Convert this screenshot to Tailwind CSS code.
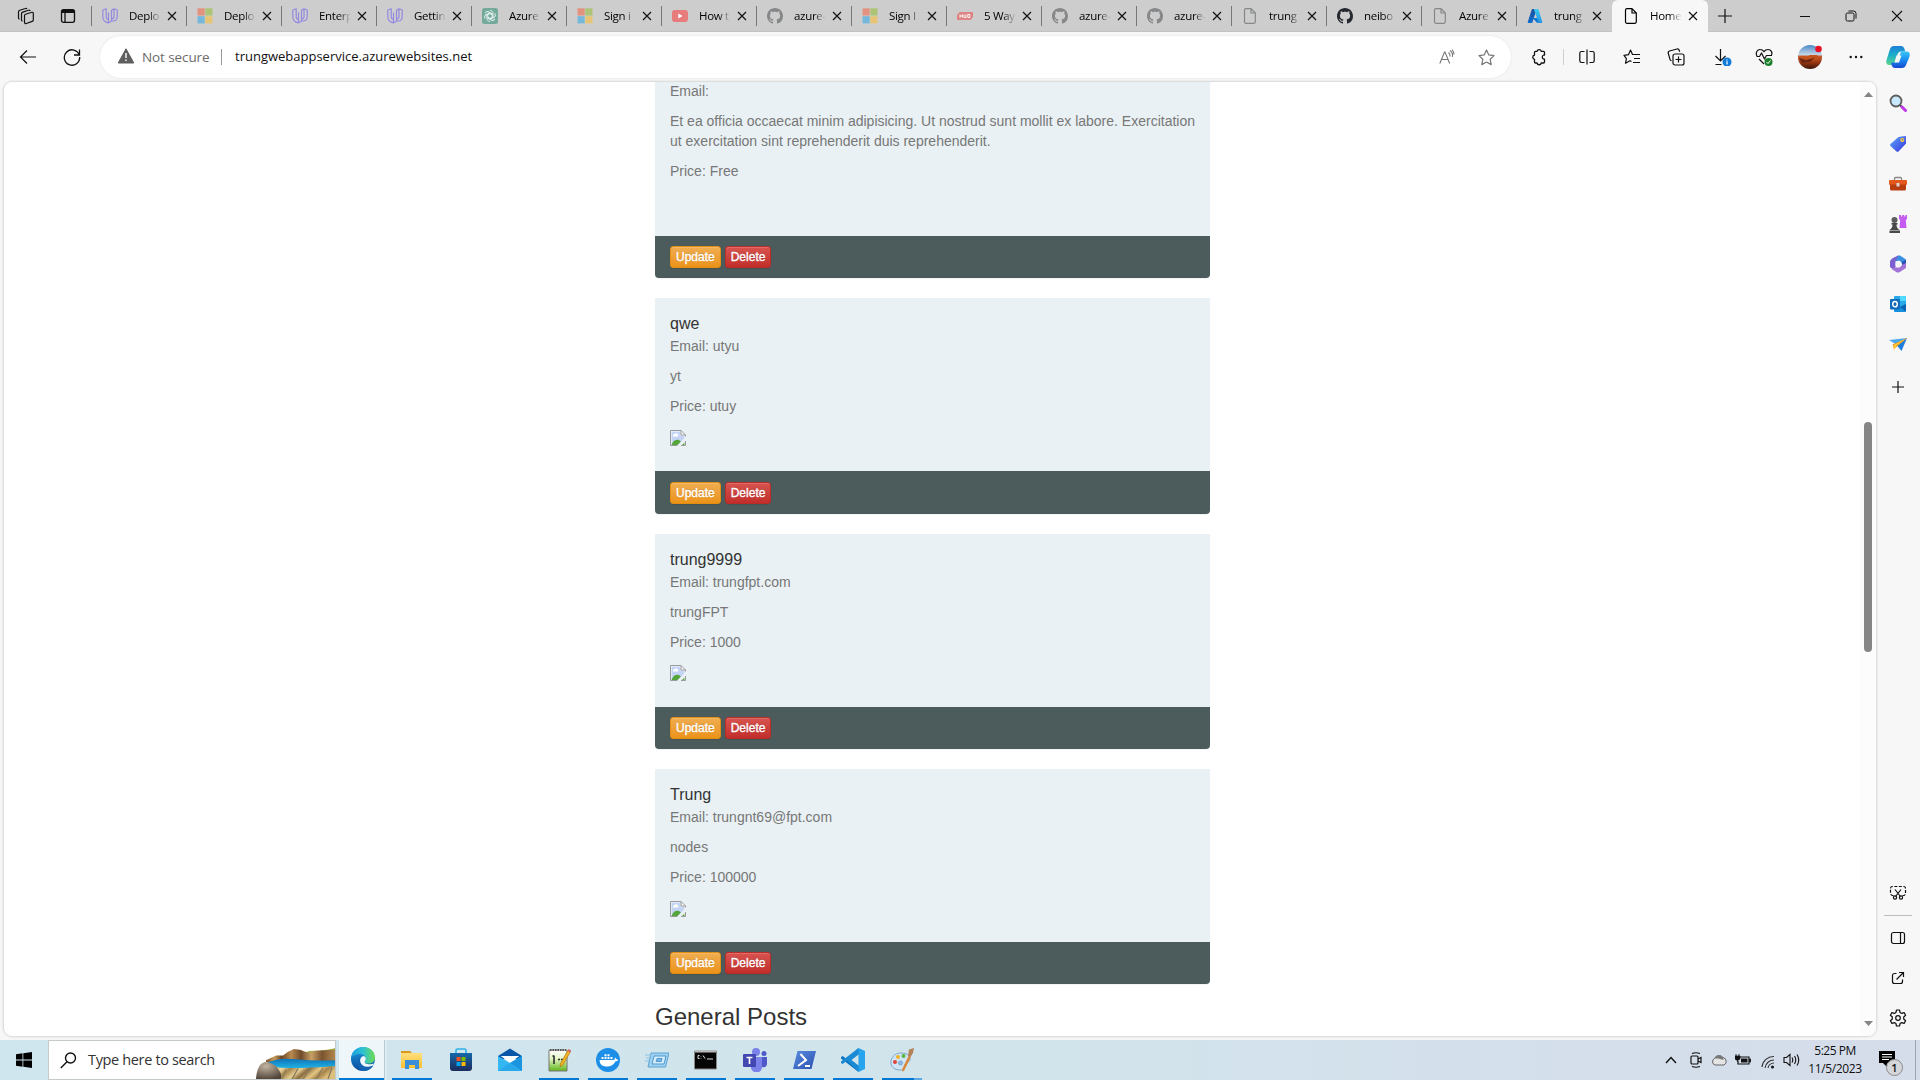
<!DOCTYPE html>
<html lang="en">
<head>
<meta charset="utf-8">
<title>Home</title>
<script src="https://cdn.jsdelivr.net/npm/@tailwindcss/browser@4"></script>
</head>
<body class="w-[1920px] h-[1080px] overflow-hidden bg-[#f7f7f7] font-['Open_Sans','Noto_Sans',sans-serif] text-black flex flex-col">

<svg class="absolute w-0 h-0" aria-hidden="true">
  <defs>
    <linearGradient id="gAz" x1="0" y1="0" x2="0" y2="1"><stop offset="0" stop-color="#1b4f9c"/><stop offset="1" stop-color="#0f6fd0"/></linearGradient>
    <linearGradient id="gAz2" x1="0" y1="0" x2="0" y2="1"><stop offset="0" stop-color="#3ccbf4"/><stop offset="1" stop-color="#2892df"/></linearGradient>
    <linearGradient id="gTag" x1="0" y1="0" x2="1" y2="1"><stop offset="0" stop-color="#5ba7f7"/><stop offset="1" stop-color="#3a36e0"/></linearGradient>
    <linearGradient id="gCopA" x1="0" y1="0" x2="0" y2="1"><stop offset="0" stop-color="#1a7fd8"/><stop offset=".5" stop-color="#1fb0c8"/><stop offset="1" stop-color="#5fd68a"/></linearGradient>
    <linearGradient id="gCopB" x1="0" y1="0" x2="0" y2="1"><stop offset="0" stop-color="#3cc4f7"/><stop offset=".5" stop-color="#1a8cf0"/><stop offset="1" stop-color="#1748d0"/></linearGradient>
    <linearGradient id="gSky" x1="0" y1="0" x2="0" y2="1"><stop offset="0" stop-color="#4a87c8"/><stop offset=".4" stop-color="#c3d5e6"/><stop offset=".48" stop-color="#c8562a"/><stop offset=".7" stop-color="#a03a14"/><stop offset="1" stop-color="#3b1409"/></linearGradient>
    <linearGradient id="gEdge" x1="0" y1="0" x2="1" y2="0"><stop offset="0" stop-color="#1b9de2"/><stop offset=".5" stop-color="#2cc3d3"/><stop offset="1" stop-color="#6fdc4e"/></linearGradient>
    <linearGradient id="gEdge2" x1="0" y1="0" x2="0" y2="1"><stop offset="0" stop-color="#1b9de2"/><stop offset="1" stop-color="#0c4a9a"/></linearGradient>
    <linearGradient id="gFold" x1="0" y1="0" x2="0" y2="1"><stop offset="0" stop-color="#ffdf7e"/><stop offset="1" stop-color="#fbc02f"/></linearGradient>
    <linearGradient id="gStore" x1="0" y1="0" x2="0" y2="1"><stop offset="0" stop-color="#1468a8"/><stop offset="1" stop-color="#1c2c5c"/></linearGradient>
    <linearGradient id="gPs" x1="0" y1="0" x2="1" y2="1"><stop offset="0" stop-color="#5a8be0"/><stop offset="1" stop-color="#2a52b0"/></linearGradient>
    <linearGradient id="gNpp" x1="0" y1="0" x2="0" y2="1"><stop offset="0" stop-color="#fff"/><stop offset=".4" stop-color="#e6f6c8"/><stop offset="1" stop-color="#5fb51a"/></linearGradient>
    <linearGradient id="gWater" x1="0" y1="0" x2="0" y2="1"><stop offset="0" stop-color="#0d74b8"/><stop offset="1" stop-color="#23b6e6"/></linearGradient>
    <linearGradient id="gRock" x1="0" y1="0" x2="1" y2="0"><stop offset="0" stop-color="#7a5330"/><stop offset=".12" stop-color="#c49a5c"/><stop offset=".22" stop-color="#6b4526"/><stop offset=".36" stop-color="#b88a4e"/><stop offset=".5" stop-color="#6f4a2a"/><stop offset=".65" stop-color="#c9a066"/><stop offset=".8" stop-color="#7a5330"/><stop offset="1" stop-color="#b48c50"/></linearGradient>
    <linearGradient id="gSand" x1="0" y1="0" x2="1" y2=".25"><stop offset="0" stop-color="#c7a560"/><stop offset=".2" stop-color="#edd79c"/><stop offset=".32" stop-color="#a5824a"/><stop offset=".48" stop-color="#e8cf92"/><stop offset=".6" stop-color="#8a6c40"/><stop offset=".75" stop-color="#e3c682"/><stop offset=".87" stop-color="#a5824a"/><stop offset="1" stop-color="#dcbf7c"/></linearGradient>
    <radialGradient id="gBoul" cx=".4" cy=".25" r=".8"><stop offset="0" stop-color="#c3b4a0"/><stop offset="1" stop-color="#4f4438"/></radialGradient>

    <symbol id="x" viewBox="0 0 16 16"><path d="M4 4l8 8M12 4l-8 8" stroke="#111" stroke-width="1.2" fill="none"/></symbol>
    <symbol id="udacity" viewBox="0 0 16 16"><path d="M.8 2 4.200.8v7.700c0 1.800.8 2.800 2.300 2.800M.8 2v6.500c0 3.300 2 5.800 5.700 6.300V4.500M6.500 14.800c1.800-.3 3-1.500 3.500-3M9.500 11.800V2.200l2.500-1.400 3.200 1.200v6.500c0 2.800-1.700 4.500-4.200 4.500-.8 0-1.500-.2-2-.7M12 .8v8c0 1.200-.8 2-2.500 2.200" stroke="#938ae0" stroke-width="1.200" fill="none" stroke-linejoin="round"/></symbol>
    <symbol id="ms" viewBox="0 0 16 16"><path fill="#e39280" d="M.5.300h7.200v7.200H.5z"/><path fill="#adc476" d="M8.300.3h7.200v7.200H8.300z"/><path fill="#75b8db" d="M.5 8.200h7.200v7.200H.5z"/><path fill="#e7c574" d="M8.300 8.200h7.200v7.200H8.300z"/></symbol>
    <symbol id="gpt" viewBox="0 0 16 16"><rect width="16" height="16" rx="2.500" fill="#74aa9c"/><g fill="none" stroke="#e9f3f0" stroke-width=".9"><path d="M8 2.500c2 0 3 1.300 3 2.800v3.500L8 10.500"/><path d="M8 2.500c2 0 3 1.300 3 2.800v3.500L8 10.500" transform="rotate(60 8 8)"/><path d="M8 2.500c2 0 3 1.300 3 2.800v3.500L8 10.500" transform="rotate(120 8 8)"/><path d="M8 2.500c2 0 3 1.300 3 2.800v3.500L8 10.500" transform="rotate(180 8 8)"/><path d="M8 2.500c2 0 3 1.300 3 2.800v3.500L8 10.500" transform="rotate(240 8 8)"/><path d="M8 2.500c2 0 3 1.300 3 2.800v3.500L8 10.500" transform="rotate(300 8 8)"/></g></symbol>
    <symbol id="yt" viewBox="0 0 16 16"><rect y="2" width="16" height="12" rx="3" fill="#e77c7c"/><path d="M6.300 5.500 10.500 8l-4.200 2.500z" fill="#fff"/></symbol>
    <symbol id="gh" viewBox="0 0 16 16"><path fill="currentColor" d="M8 0C3.580 0 0 3.580 0 8c0 3.540 2.290 6.530 5.470 7.590.4.070.55-.17.55-.38 0-.19-.01-.82-.01-1.490-2.010.37-2.530-.49-2.690-.94-.09-.23-.48-.94-.82-1.130-.28-.15-.68-.52-.01-.53.63-.01 1.080.58 1.230.82.72 1.210 1.870.87 2.330.66.070-.52.28-.87.51-1.070-1.780-.2-3.640-.89-3.640-3.950 0-.87.31-1.590.82-2.150-.08-.2-.36-1.020.08-2.120 0 0 .67-.21 2.200.82.640-.18 1.320-.27 2-.27s1.360.09 2 .27c1.530-1.040 2.200-.82 2.200-.82.44 1.100.16 1.920.08 2.120.51.56.82 1.270.82 2.150 0 3.070-1.870 3.750-3.650 3.950.29.25.54.73.54 1.480 0 1.070-.01 1.930-.01 2.200 0 .21.15.46.55.38A8.010 8.010 0 0 0 16 8c0-4.420-3.580-8-8-8z"/></symbol>
    <symbol id="page" viewBox="0 0 16 16"><path d="M4 .7h5l4.300 4.300v8.800a1.500 1.500 0 0 1-1.500 1.500H4a1.500 1.500 0 0 1-1.500-1.500V2.200A1.500 1.500 0 0 1 4 .7zM9 .7V5h4.300" fill="none" stroke="currentColor" stroke-width="1.200" stroke-linejoin="round"/></symbol>
    <symbol id="hud" viewBox="0 0 16 16"><path d="M2.500 4H16v5l-2.500 3H0V7z" fill="#dd8583"/><path d="M3 6.500v3M5.500 6.500v3M3 8h2.500M7 6.500v3h2v-3M10.800 6.500v3h2v-3z" stroke="#fff" stroke-width=".9" fill="none"/></symbol>
    <symbol id="azure" viewBox="0 0 16 16"><path d="M5.500 1h4.300L5.200 15H1.500a.8.800 0 0 1-.8-1L4.700 1.700A.8.800 0 0 1 5.500 1z" fill="url(#gAz)"/><path d="M5.500 10h6.800l2 4.500-4 .5z" fill="#0f78d4"/><path d="M6.800 1h3.900a.8.800 0 0 1 .8.600L15.300 14a.8.800 0 0 1-.8 1h-4a.9.900 0 0 0 .8-1z" fill="url(#gAz2)"/></symbol>
    <symbol id="broken" viewBox="0 0 16 16"><path d="M.5.500h10.500l4.500 4.500v10.500H.5z" fill="#fff"/><path d="M1.500 1.500h9v4h4v3L8 15H1.500z" fill="#c3d4f5"/><path d="M3 5.500a1.500 1.500 0 0 1 1.500-1.500 2 2 0 0 1 3.500 1 1 1 0 0 1 0 1.500H3z" fill="#fff"/><path d="M1.500 15c1.500-4.500 4.500-6 7.500-5l2 1.500L7.500 15z" fill="#55a63a"/><path d="M16 6.500 7.500 16H11l5-5z" fill="#e9f1f4"/><path d="M11.500 15.500l3-3v3z" fill="#55a63a"/><path d="M.5 15.500V.5H11l4.500 4.500v1.500M11 .5V5h4.500M.5 15.500h7M11 15.500h4.500V11" fill="none" stroke="#9a9a9a"/></symbol>
  </defs>
</svg>

<!-- Tab strip -->
<header class="h-8 shrink-0 bg-[#cdcdcd] flex shadow-[inset_0_-1px_0_#c2c2c2]">
  <div class="w-[92px] flex items-center pl-[17px] gap-[25px] border-r border-[#777] h-5 mt-1.5">
    <svg class="size-[18px]" viewBox="0 0 18 18" fill="none" stroke="#111" stroke-width="1.200" stroke-linejoin="round"><path d="M8.500 7.300 15 5.300a1 1 0 0 1 1.300 1V13a1.500 1.500 0 0 1-1 1.400L9.300 16.500a1.300 1.300 0 0 1-1.800-1.200V8.700a1.500 1.500 0 0 1 1-1.400zM5.500 14.300a1.500 1.500 0 0 1-1-1.500V6.800a2 2 0 0 1 1.300-1.700l5.700-1.900a1.200 1.200 0 0 1 1.700.8M2.500 12.300a1.500 1.500 0 0 1-1-1.500V5a2 2 0 0 1 1.300-1.700L8.500 1.500a1.200 1.200 0 0 1 1.500.5"/></svg>
    <svg class="size-4" viewBox="0 0 16 16" fill="none" stroke="#111" stroke-width="1.300"><rect x="1.500" y="1.700" width="13" height="12.600" rx="2"/><path d="M1.500 4h13M1.500 3h13" stroke-width="2"/><path d="M5 4v10"/></svg>
  </div>
  <div id="tabs" class="flex"></div>
  <div class="flex items-center">
    <svg class="w-4 h-4 ml-[9px]" viewBox="0 0 16 16" stroke="#111" stroke-width="1.200"><path d="M8 1v14M1 8h14"/></svg>
    <svg class="w-3 h-3 ml-[66px]" viewBox="0 0 12 12" stroke="#111"><path d="M1 6.500h10"/></svg>
    <svg class="w-3 h-3 ml-[34px]" viewBox="0 0 12 12" stroke="#111" fill="none"><rect x="1" y="3" width="8" height="8" rx="1.500"/><path d="M3.500 1h5a2.500 2.500 0 0 1 2.500 2.500v5"/></svg>
    <svg class="w-3 h-3 ml-[34px]" viewBox="0 0 12 12" stroke="#111" stroke-width="1.100"><path d="M1 1l10 10M11 1 1 11"/></svg>
  </div>
</header>

<!-- Address bar -->
<div class="h-[49px] shrink-0 flex items-center text-[#111] pt-px">
  <svg class="w-[18px] h-4 ml-[19px]" viewBox="0 0 18 16" fill="none" stroke="currentColor" stroke-width="1.200"><path d="M17 8H1.500M8 1.500 1.500 8 8 14.500"/></svg>
  <svg class="w-[18px] h-[18px] ml-[26px]" viewBox="0 0 18 18" fill="none" stroke="currentColor" stroke-width="1.300"><path d="M16.300 7A7.700 7.700 0 1 0 16.700 9M16.500 1.500V7H11"/></svg>
  <div class="ml-[19px] w-[1411px] h-[42px] rounded-full bg-white shadow-[0_0_2px_#dcdcdc] flex items-center text-[14px]">
    <svg class="w-4 h-4 ml-[18px] mt-[-2px]" viewBox="0 0 16 16"><path d="M8 .8 15.800 15H.2z" fill="#5e5e5e" stroke="#5e5e5e" stroke-linejoin="round"/><path d="M8 5v5M8 11.500v1.500" stroke="#fff" stroke-width="1.400"/></svg>
    <span class="ml-2 w-[67px] text-[#6b6b6b] whitespace-nowrap text-[13.500px] tracking-[-0.1px]">Not secure</span>
    <span class="ml-3 w-px h-4 bg-[#999]"></span>
    <span class="ml-[13px] w-[240px] whitespace-nowrap text-[13px]">trungwebappservice.azurewebsites.net</span>
    <svg class="ml-auto size-4" viewBox="0 0 16 16" fill="none" stroke="#777" stroke-width="1.100"><path d="M.8 14.500 5.500 3h.5l4.700 11.500M2.500 10.500h6.500M9.500 3.500a4 4 0 0 1 1.500 4M11 1.500a6 6 0 0 1 2.300 6.500M13 .5a8 8 0 0 1 2 5"/></svg>
    <svg class="ml-[23px] mr-[16px] size-[17px]" viewBox="0 0 17 17" fill="none" stroke="#777" stroke-width="1.200" stroke-linejoin="round"><path d="M8.500 1l2.300 4.900 5.200.7-3.800 3.700 1 5.300-4.700-2.600-4.700 2.600 1-5.300L1 6.600l5.200-.7z"/></svg>
  </div>
  <svg class="ml-[19px] size-[18px]" viewBox="0 0 18 18" fill="none" stroke="currentColor" stroke-width="1.300" stroke-linejoin="round"><path d="M5.500 3.300H7a2.200 2.200 0 0 1 4.300 0h2.200a1 1 0 0 1 1 1V7h-.7a2.200 2.200 0 0 0 0 4.200h.7V14a1 1 0 0 1-1 1H11.300a2.200 2.200 0 0 1-4.300 0H5.500a1 1 0 0 1-1-1v-2.700a2.200 2.200 0 0 1 0-4.300V4.300a1 1 0 0 1 1-1z"/></svg>
  <span class="ml-[15px] w-px h-4 bg-[#cfcfcf]"></span>
  <svg class="ml-[15px] size-4" viewBox="0 0 16 16" fill="none" stroke="currentColor" stroke-width="1.200"><path d="M8 .5v15M5.500 2.500h-3a1.700 1.700 0 0 0-1.700 1.700v7.600a1.700 1.700 0 0 0 1.700 1.700h3M10.500 2.500h3a1.700 1.700 0 0 1 1.700 1.700v7.600a1.700 1.700 0 0 1-1.700 1.700h-3"/></svg>
  <svg class="ml-7 size-[18px]" viewBox="0 0 18 18" fill="none" stroke="currentColor" stroke-width="1.200" stroke-linejoin="round"><path d="M8.500 13.500 7 12.700 2.500 15.300l.9-4.700L1 7.300l4.500-.6 2-4.700 2 4.500h7.500M11 10.500h6M10 14.500h7"/></svg>
  <svg class="ml-[26px] size-[18px]" viewBox="0 0 18 18" fill="none" stroke="currentColor" stroke-width="1.200"><rect x="6" y="6" width="11" height="11" rx="2"/><path d="M11.500 8.500v6M8.500 11.500h6M4.500 12.700A2 2 0 0 1 3 11.300L1.200 5A1.800 1.800 0 0 1 2.500 3l7.500-2a1.800 1.800 0 0 1 2.200 1.200l.5 1.600"/></svg>
  <svg class="ml-[29px] size-[18px]" viewBox="0 0 18 18" fill="none"><path d="M6.500 1v12M1.500 8l5 5 5-5M1.500 16.500h6" stroke="currentColor" stroke-width="1.200"/><circle cx="13" cy="14" r="4.500" fill="#0f7bd8"/><path d="M13 11.500v1M13 13.300v3.200" stroke="#fff" stroke-width="1.200"/></svg>
  <svg class="ml-[23px] size-[18px]" viewBox="0 0 18 18" fill="none"><path d="M2 8C0 4.500 2.500 1.500 5 1.500c2 0 3.200 1 4 2.200 .8-1.200 2-2.200 4-2.200 3 0 5 3 3.200 6M1.500 8.500h3L6.500 5l3 6 2-3.500h5.500M4 11l5 5" stroke="currentColor" stroke-width="1.200" stroke-linejoin="round"/><circle cx="13.500" cy="14" r="4" fill="#1a7f2b"/><path d="m11.500 14 1.500 1.500 2.500-3" stroke="#fff"/></svg>
  <svg class="ml-[25px] size-6" viewBox="0 0 24 24"><circle cx="12" cy="12" r="12" fill="url(#gSky)"/><path d="M2 12l4-1 3 1 3-2h7l3 4-5 1-8 2-6-1z" fill="#c2521c"/><path d="M1 13l7 2 4-1 5-1-5 4-8 1z" fill="#6d2410"/><circle cx="20.500" cy="4" r="3.300" fill="#e81123"/></svg>
  <svg class="ml-[26px] w-4 h-4" viewBox="0 0 16 16" fill="#111"><circle cx="2.700" cy="8" r="1.200"/><circle cx="8" cy="8" r="1.200"/><circle cx="13.300" cy="8" r="1.200"/></svg>
  <svg class="ml-[22px] size-6" viewBox="0 0 24 24"><path d="M8 1h7c2 0 3 1.500 3.500 3l.7 2.500H15c-2 0-3 1.500-3.500 3L9 17.500c-.6 1.500-1.500 2.500-3.500 2.500H3C.5 20-.2 17.500.5 15L4 4C4.800 2 6 1 8 1z" fill="url(#gCopA)"/><path d="M16 23H9c-2 0-3-1.500-3.500-3l-.3-2.500H9c2 0 3-1.500 3.500-3L15 6.500h6c2.500 0 3.200 2.500 2.500 5L20 20c-.8 2-2 3-4 3z" fill="url(#gCopB)"/><path d="M10.500 10.500h5l-2.500 7h-4.500z" fill="#f7f7f7"/></svg>
</div>

<div class="flex h-[959px] shrink-0">
  <!-- Page -->
  <main class="ml-1 mt-px w-[1872px] h-[954px] rounded-lg bg-white overflow-hidden shadow-[0_0_2px_1px_#d6d6d6] flex font-['Liberation_Sans',Arial,sans-serif] text-[14px] leading-5 text-[#777]">
    <div class="ml-[651px] w-[555px] h-[954px] flex flex-col gap-5">
      <section class="-mt-px shrink-0 h-[197.400px] rounded-b-[4px] overflow-hidden flex flex-col bg-[#e9f1f4] shadow-[0_1px_1px_rgba(0,0,0,0.05)]">
        <div class="h-[155px] shrink-0 px-[15px] flex flex-col gap-2.5">
          <p>Email:</p>
          <p>Et ea officia occaecat minim adipisicing. Ut nostrud sunt mollit ex labore. Exercitation ut exercitation sint reprehenderit duis reprehenderit.</p>
          <p>Price: Free</p>
        </div>
        <div class="flex-1 bg-[#4c5b5b] px-[15px] flex items-center gap-1 text-xs leading-[18px] text-white [-webkit-text-stroke:0.35px_white]">
          <button class="h-[22px] px-[5px] rounded-[3px] border border-[#e38d13] bg-linear-to-b from-[#f0ad4e] to-[#eb9316] shadow-[inset_0_1px_0_rgba(255,255,255,0.15),0_1px_1px_rgba(0,0,0,0.075)] [text-shadow:0_-1px_0_rgba(0,0,0,0.2)]">Update</button>
          <button class="h-[22px] px-[5px] rounded-[3px] border border-[#b92c28] bg-linear-to-b from-[#d9534f] to-[#c12e2a] shadow-[inset_0_1px_0_rgba(255,255,255,0.15),0_1px_1px_rgba(0,0,0,0.075)] [text-shadow:0_-1px_0_rgba(0,0,0,0.2)]">Delete</button>
        </div>
      </section>
      <div id="cards" class="flex flex-col gap-5"></div>
      <h2 class="text-2xl leading-[26px] text-[#333]">General Posts</h2>
    </div>
    <div class="ml-auto w-4 bg-[#fcfcfc] flex flex-col items-center">
      <svg class="mt-2.5 w-[9px] h-[5px]" viewBox="0 0 9 5"><path d="M4.500 0 9 5H0z" fill="#858585"/></svg>
      <div class="mt-[325px] w-2 h-[230px] rounded-full bg-[#858585]"></div>
      <svg class="mt-[369px] w-[9px] h-[5px]" viewBox="0 0 9 5"><path d="M4.500 5 9 0H0z" fill="#858585"/></svg>
    </div>
  </main>

  <!-- Sidebar -->
  <aside class="w-[44px] flex flex-col items-center pt-[13px] text-[#111]">
    <svg class="size-[18px] shrink-0" viewBox="0 0 18 18"><path d="M11 11l5 5" stroke="#444" stroke-width="2"/><path d="M13 13l3.500 3.500" stroke="#c239e8" stroke-width="3" stroke-linecap="round"/><circle cx="7" cy="7" r="5.500" fill="#c9e8fb" stroke="#5c5c5c" stroke-width="1.800"/></svg>
    <svg class="size-[18px] shrink-0 mt-[23px]" viewBox="0 0 18 18"><path d="M9.500 2 16 1a1 1 0 0 1 1 1v6.500L9.500 16.500a1.500 1.500 0 0 1-2 0l-6-5.500a1.500 1.500 0 0 1 0-2z" fill="url(#gTag)"/><circle cx="13.300" cy="5" r="2" fill="#ffd335"/><circle cx="13.500" cy="4.800" r=".8" fill="#5a50d0"/></svg>
    <svg class="size-[18px] shrink-0 mt-[22px]" viewBox="0 0 18 18"><path d="M5.500 5V3.500a1 1 0 0 1 1-1h5a1 1 0 0 1 1 1V5" stroke="#888" stroke-width="1.300" fill="none"/><rect y="5" width="18" height="5" rx="1" fill="#e2581e"/><path d="M1 9.500h16V14a1.500 1.500 0 0 1-1.500 1.500h-13A1.500 1.500 0 0 1 1 14z" fill="#b83d10"/><rect x="7.500" y="8" width="3" height="3.500" rx=".5" fill="#d8d8d8"/></svg>
    <svg class="size-[18px] shrink-0 mt-[22px]" viewBox="0 0 18 18"><path d="M10 0h2v1.500h1.200V0h2v1.500h1.200V0H18v4l-1.200 1 .7 8H10.500l.7-8L10 4z" fill="#c55cf2"/><circle cx="5.500" cy="5" r="3" fill="#5c5c5c"/><path d="M2.500 8h6v1.500H7.500c0 3 1 4 3 5.500H.5c2-1.500 3-2.500 3-5.500h-1zM.5 15.500H11V18H.5z" fill="#484848"/></svg>
    <svg class="size-[18px] shrink-0 mt-[22px]" viewBox="0 0 18 18"><path d="M9 .5 3 3.500 1 6v6l2.500 2 3-1.500V6l4-3z" fill="#7c5fd0"/><path d="M9 .5h2L17 4.500V10l-4-2-3-2.500-3.500 1z" fill="#3a8fe0"/><path d="M17 7v6l-7 4.500H8L2.500 14l4-1.500h4L13 10z" fill="#a274d8"/><path d="M17 8l-4 2-.5-3 4.500-2z" fill="#2c50b5"/><circle cx="9.500" cy="9" r="3" fill="#f7f7f7"/></svg>
    <svg class="size-[18px] shrink-0 mt-[22px]" viewBox="0 0 18 18"><rect x="5" y="1" width="12" height="11" rx="1" fill="#28a8ea"/><path d="M11 1h5a1 1 0 0 1 1 1v4h-6z" fill="#50d9ff"/><path d="M5 9l6 3 6-3v7a1 1 0 0 1-1 1H6a1 1 0 0 1-1-1z" fill="#1490df"/><path d="m17 9-6 3 6 4.500z" fill="#0a63b0"/><rect x="1" y="4" width="10" height="10.500" rx="1" fill="#0f6cbd"/><ellipse cx="6" cy="9.200" rx="2.300" ry="2.600" fill="none" stroke="#fff" stroke-width="1.500"/></svg>
    <svg class="size-[18px] shrink-0 mt-[22px]" viewBox="0 0 18 18"><path d="M0 5 18 3 8 10z" fill="#4ea8f0"/><path d="M18 3 12.500 16 7.500 10z" fill="#1e7ee0"/><path d="M18 3 3.500 9.500 5 14z" fill="#e59a16"/><path d="M18 3 7.500 10.500 5 15.500 4.500 10z" fill="#ffc83d"/></svg>
    <svg class="size-3.5 shrink-0 mt-[27px]" viewBox="0 0 14 14" stroke="currentColor" stroke-width="1.200"><path d="M7 1v12M1 7h12"/></svg>
    <svg class="size-[18px] shrink-0 mt-[489px]" viewBox="0 0 18 18" fill="none" stroke="currentColor" stroke-width="1.200"><path d="M4.500 12.500H3.500A2 2 0 0 1 1.500 10.500v-5a2 2 0 0 1 2-2h11a2 2 0 0 1 2 2v5a2 2 0 0 1-2 2h-1" stroke-dasharray="3 1.500"/><path d="M6 6.500l5.500 7M12 6.500l-5.500 7"/><circle cx="6" cy="14.500" r="1.600"/><circle cx="12" cy="14.500" r="1.600"/></svg>
    <span class="w-7 h-px bg-[#bdbdbd] shrink-0 mt-[14px]"></span>
    <svg class="size-4 shrink-0 mt-[14px]" viewBox="0 0 16 16" fill="none" stroke="currentColor" stroke-width="1.200"><rect x="1.500" y="2.500" width="13" height="11" rx="2"/><path d="M10.500 2.500v11"/></svg>
    <svg class="size-4 shrink-0 mt-6" viewBox="0 0 16 16" fill="none" stroke="currentColor" stroke-width="1.200"><path d="M6.500 3.500h-2a2 2 0 0 0-2 2v6a2 2 0 0 0 2 2h6a2 2 0 0 0 2-2v-2M6.500 9.500l7-7M9 2.500h4.500V7"/></svg>
    <svg class="size-[18px] shrink-0 mt-[23px]" viewBox="0 0 18 18" fill="none" stroke="currentColor" stroke-width="1.200" stroke-linejoin="round"><circle cx="9" cy="9" r="2.300"/><path d="M7.500 1h3l.6 2.500 1.500.9 2.500-.8 1.500 2.600-1.900 1.800v2l1.900 1.800-1.500 2.600-2.500-.8-1.500.9-.6 2.500h-3l-.6-2.500-1.500-.9-2.500.8-1.500-2.600L3.300 10V8L1.400 6.200l1.500-2.600 2.500.8 1.500-.9z"/></svg>
  </aside>
</div>

<!-- Taskbar -->
<footer class="h-10 shrink-0 flex bg-linear-to-r from-[#cfe6ee] via-[#d1e4ec] to-[#d5dcea]">
  <div class="w-12 flex items-center justify-center"><svg class="size-4" viewBox="0 0 16 16"><path d="M0 2.200 6.500 1.300V7.600H0zM7.300 1.200 16 0v7.600H7.300zM0 8.400h6.500v6.300L0 13.800zM7.300 8.400H16V16l-8.700-1.200z"/></svg></div>
  <div class="w-72 bg-white border border-[#c4c9cc] flex items-center overflow-hidden">
    <svg class="ml-[11px] size-[17px]" viewBox="0 0 17 17" fill="none" stroke="#111" stroke-width="1.400"><circle cx="10.500" cy="6" r="5"/><path d="M7 9.800.8 16"/></svg>
    <span class="ml-[11px] w-[130px] whitespace-nowrap text-[14.500px] tracking-[-0.35px] text-[#333]">Type here to search</span>
    <svg class="ml-auto -mr-px w-20 h-[32px] mt-[6px] shrink-0" viewBox="0 0 80 34" preserveAspectRatio="none"><path d="M38 10 Q50 4 58 4 T80 1v16H38z" fill="#9aad3a"/><path d="M10 14l10-5 7 0 5-4 6-3 6 1 8 3 8-2 20-1v13L10 16z" fill="url(#gRock)"/><path d="M8 18Q22 11 40 13T80 14v9H10z" fill="url(#gWater)"/><path d="M16 21q20 3 64-1v14H22z" fill="url(#gSand)"/><path d="M30 24 26 34M42 23l-6 11M55 22l-8 12M67 22l-7 12M76 22l-4 12" stroke="#8a7c5c" stroke-width="1.300"/><path d="M0 34Q1 18 9 16q8 0 13 7 4 5 3 11z" fill="url(#gBoul)"/></svg>
  </div>
  <div class="ml-[3px] w-[45px] bg-[#eff6f9] border-b-2 border-[#0078d4] flex items-center justify-center pl-0.5">
    <svg class="size-6" viewBox="0 0 24 24"><circle cx="12" cy="12" r="12" fill="url(#gEdge2)"/><path d="M0 11.500C1 4 6 0 12.500 0 19 0 24 5 24 10.500c0 4-3 6-6.500 6-3 0-4.500-1-3.500-2.500 2-3 0-7-5-7-4 0-8 2-9 4.500z" fill="url(#gEdge)"/><path d="M9.500 9.500c-2 6 2 10.500 8 10.500 2 0 3.500-.6 4.500-1-2.500 4-6.500 5-10 5C7 22 5 16 9.500 9.500z" fill="#1464b4"/><path d="M14 14c2-3 0-4.500-1.500-5-3 1-4 4-3 6.500 1.500 4 6 5.500 12.500 3l1-2c-3 1.500-11 1-9-2.500z" fill="#f0f8fb"/></svg>
  </div>
  <div class="w-[3px] bg-[#dcecf2] border-l border-[#b9cdd5]"></div>
  <div id="apps" class="flex"></div>
  <div class="ml-auto flex items-center text-[#111]">
    <svg class="w-3 h-2" viewBox="0 0 12 8" fill="none" stroke="currentColor" stroke-width="1.400"><path d="M1 7l5-5.500L11 7"/></svg>
    <svg class="ml-[13px] w-3 h-4" viewBox="0 0 12 16" fill="none" stroke="currentColor" stroke-width="1.200"><rect x="1" y="4" width="7" height="8" rx="1"/><path d="M8 7l3-1.500v5L8 9M2 1.500Q6 0 10 1.500M2 14.500q4 1.500 8 0"/></svg>
    <svg class="ml-[9px] w-4 h-3" viewBox="0 0 16 12"><path d="M4 11a3.500 3.500 0 0 1-.5-6.500 5 5 0 0 1 8.500-1A4 4 0 0 1 13 11z" fill="#e4e4e4" stroke="#444" stroke-width=".8"/><path d="M3.500 4.500a5 5 0 0 1 8.500-1L12.500 6l-5-1.500z" fill="#777"/></svg>
    <svg class="ml-2 w-4 h-3" viewBox="0 0 16 12"><path d="M5 3h9v7H3V7" fill="none" stroke="#111" stroke-width="1.200"/><path d="M6 4.500h6.500v4H6z" fill="#111"/><path d="M14.500 5h1.300v3h-1.300zM0 2h5v2.500L4 6H1L0 4.500zM1 0v2M4 0v2M2.500 6v2" stroke="#111" fill="#111" stroke-width=".8"/></svg>
    <svg class="ml-2.5 w-[14px] h-[14px] mt-1" viewBox="0 0 14 14" fill="none" stroke="#333" stroke-width="1.100"><path d="M1 12A11.500 11.500 0 0 1 13 1.500M4 13A9 9 0 0 1 13 5M7 13a6 6 0 0 1 6-5"/><circle cx="11.500" cy="12" r="1.500" fill="#111" stroke="none"/></svg>
    <svg class="ml-2 w-[18px] h-4" viewBox="0 0 18 16" fill="none" stroke="currentColor" stroke-width="1.100"><path d="M1 5.500h2.500L7 2.500v11L3.500 10.500H1zM9 5.500q1.500 2.500 0 5M11.500 4q2.500 4 0 8M14 2.500q3.500 5.500 0 11"/></svg>
    <div class="ml-1 w-[60px] text-center text-[12px] leading-[18px] tracking-[-0.5px] whitespace-nowrap">5:25 PM<br><span class="tracking-[-0.35px]">11/5/2023</span></div>
    <div class="relative ml-[14px] w-[30px] h-10">
      <svg class="absolute left-0 top-[11px] w-4 h-[17px]" viewBox="0 0 16 17"><path d="M0 0h16v12H8v4l-4-4H0z"/><path d="M3 3.500h10M3 6h10M3 8.500h7" stroke="#fff"/></svg>
      <span class="absolute left-[7px] top-[19px] size-[17px] rounded-full border border-[#888] bg-[#d4d6da] text-[11px] leading-[15px] text-center font-semibold">1</span>
    </div>
    <span class="ml-[6px] mr-1 w-px h-10 bg-[#9ca5b0]"></span>
  </div>
</footer>

<script>
  const tabs = [
    ['udacity','Deplo'],['ms','Deplo'],['udacity','Enterp'],['udacity','Gettin'],['gpt','Azure'],['ms','Sign i'],
    ['yt','How t'],['gh','azure-'],['ms','Sign I'],['hud','5 Way'],['gh','azure-'],['gh','azure-'],['page','trung'],
    ['gh','neibo','text-[#24292f]'],['page','Azure'],['azure','trung'],['page','Home','active']
  ];
  document.getElementById('tabs').innerHTML = tabs.map(([icon, label, mod], i) => {
    const active = mod === 'active';
    const box = active ? 'w-24 h-8 rounded-t-md bg-[#f7f7f7] flex items-center pl-[11px]'
                       : 'w-[95px] h-8 flex items-center pl-[10px]';
    const tint = active ? 'text-black' : (mod || 'text-[#858789]');
    const sep = active || i === tabs.length - 2 ? '' : '<span class="w-px h-5 shrink-0 bg-[#777]"></span>';
    return `<div class="${box}"><svg class="size-4 shrink-0 ${tint}"><use href="#${icon}"/></svg>
      <span class="ml-[11px] w-[32px] shrink-0 whitespace-nowrap text-[11.5px] tracking-[-0.3px] [mask-image:linear-gradient(to_right,#000_60%,transparent_100%)]">${label}</span>
      <svg class="size-4 ml-[3px] mr-1.5 shrink-0"><use href="#x"/></svg>${sep}</div>`;
  }).join('');

  const posts = [
    ['qwe','utyu','yt','utuy'],
    ['trung9999','trungfpt.com','trungFPT','1000'],
    ['Trung','trungnt69@fpt.com','nodes','100000']
  ];
  document.getElementById('cards').innerHTML = posts.map(([name, mail, text, price]) => `
    <section class="h-[215.3px] shrink-0 rounded-b-[4px] overflow-hidden flex flex-col bg-[#e9f1f4] shadow-[0_1px_1px_rgba(0,0,0,0.05)]">
      <div class="h-[173px] shrink-0 px-[15px] pt-[15px]">
        <h3 class="text-base leading-[22px] mb-px text-[#333]">${name}</h3>
        <div class="flex flex-col gap-2.5"><p>Email: ${mail}</p><p>${text}</p><p>Price: ${price}</p></div>
        <svg class="size-4 mt-[13.6px]"><use href="#broken"/></svg>
      </div>
      <div class="flex-1 bg-[#4c5b5b] px-[15px] flex items-center gap-1 text-xs leading-[18px] text-white [-webkit-text-stroke:0.35px_white]">
        <button class="h-[22px] px-[5px] rounded-[3px] border border-[#e38d13] bg-linear-to-b from-[#f0ad4e] to-[#eb9316] shadow-[inset_0_1px_0_rgba(255,255,255,0.15),0_1px_1px_rgba(0,0,0,0.075)] [text-shadow:0_-1px_0_rgba(0,0,0,0.2)]">Update</button>
        <button class="h-[22px] px-[5px] rounded-[3px] border border-[#b92c28] bg-linear-to-b from-[#d9534f] to-[#c12e2a] shadow-[inset_0_1px_0_rgba(255,255,255,0.15),0_1px_1px_rgba(0,0,0,0.075)] [text-shadow:0_-1px_0_rgba(0,0,0,0.2)]">Delete</button>
      </div>
    </section>`).join('');

  const apps = [
    [1,'<path d="M1 3h9l2 2H1z" fill="#d99a1b"/><path d="M1 5h21v15H1z" fill="url(#gFold)"/><path d="M5 12h14v9h-4v-4H9v4H5z" fill="#3b8fd8"/>'],
    [0,'<path d="M7 5V2.500A1.500 1.500 0 0 1 8.500 1h7A1.500 1.500 0 0 1 17 2.500V5" fill="none" stroke="#2fb1ea" stroke-width="1.600"/><path d="M1 5h22v15a3 3 0 0 1-3 3H4a3 3 0 0 1-3-3z" fill="url(#gStore)"/><path d="M7.500 9h4v4h-4z" fill="#f25022"/><path d="M12.500 9h4v4h-4z" fill="#7fba00"/><path d="M7.500 14h4v4h-4z" fill="#00a4ef"/><path d="M12.500 14h4v4h-4z" fill="#ffb900"/>'],
    [0,'<path d="M0 8 12 .5 24 8v3H0z" fill="#0a56a8"/><path d="M3 8h18l-9 7z" fill="#fff"/><path d="M0 8l12 7L24 8v15H0z" fill="#35b8f1"/><path d="M24 23 12 15 24 8z" fill="#1b95e0"/><path d="m0 23 12-8 12 8z" fill="#29a9ea"/><path d="M3 8h18l-9 6z" fill="#fff"/>'],
    [1,'<path d="M2 2h18v21H2z" fill="url(#gNpp)" stroke="#777"/><path d="M3 2h16" stroke="#555" stroke-width="2" stroke-dasharray="1.500 1"/><path d="M7 8v8M5.500 8h2M11 11.500h2M14 11.500h2" stroke="#222" stroke-width="1.500"/><path d="M21 2l2.500 1.500L16 17l-3 2 .5-3.500z" fill="#f0b323" stroke="#a86b10" stroke-width=".6"/><path d="m20.500 3 1-2 3 1.500-1 2z" fill="#d86a6a"/>'],
    [1,'<circle cx="12" cy="12" r="12" fill="#1d8fe8"/><path d="M3.500 12h14c1 0 1.500-1 1.500-2.500 1 .5 1.300 1.200 1.300 1.800 1 0 1.700.2 2 .5-.6 1.200-1.600 1.700-3 1.700-1.500 3.500-4.500 5-8 5-5 0-7.500-2-7.800-6.500zM5.500 9h2v2h-2zM8.500 9h2v2h-2zM11.500 9h2v2h-2zM14.500 9h2v2h-2zM8.500 6.300h2v2h-2zM11.500 6.300h2v2h-2z" fill="#fff"/>'],
    [1,'<path d="M6 5h18l-3.500 14H3z" fill="#9fd0f0" stroke="#5ba3d4"/><path d="M9 8h12l-2 8H7z" fill="#d4ecfa" stroke="#4f9bd0"/><path d="M12 10.500h5l-.8 3h-5z" fill="#77b6e2" stroke="#3f8cc5" stroke-width=".8"/><path d="M0 7h6M1 10h4M0 13h4" stroke="#8cc0e4"/>'],
    [1,'<path d="M.5 3h22v18H.5z" fill="#050505" stroke="#888"/><path d="M1 3.500h21" stroke="#bbb" stroke-width="2"/><path d="M5.500 7.500H4v3h1.500M7 8v.5M7 10v.5M9 7.500l2 3M13 11h6" stroke="#ddd" fill="none"/>'],
    [1,'<circle cx="13" cy="4" r="4" fill="#7b83eb"/><circle cx="21" cy="5.500" r="2.500" fill="#5059c9"/><path d="M17 9h7v7a3.500 3.500 0 0 1-5 3z" fill="#5059c9"/><path d="M8 9h11v9a5.500 5.500 0 0 1-11 2z" fill="#7b83eb"/><rect y="6" width="13" height="13" rx="1" fill="#4347b0"/><path d="M3.500 9.500h6M6.500 9.500V16" stroke="#fff" stroke-width="1.600"/>'],
    [1,'<path d="M5.500 3H24l-4.500 18H1z" fill="url(#gPs)"/><path d="m8.500 6 5.500 6-8 6M13 18h5" stroke="#fff" stroke-width="2" fill="none"/>'],
    [1,'<path d="M17.500 0 6 11.500 1.800 8 0 9v1.500L17.500 24l1-5z" fill="#1174bd"/><path d="M17.500 24 6 12.500 1.800 16 0 15v-1.500L17.500 0l1 5z" fill="#1a8ad4"/><path d="M17.500 0 24 3v18l-6.500 3z" fill="#28a3ee"/><path d="M17.500 6.500v11L10.500 12z" fill="#d2e4ec"/>'],
    [2,'<path d="M11 5c6 0 10 3 9 7-1 3-4 2-5 4s0 6-5 6C4 22 0 18 1 13s5-8 10-8z" fill="#cfe4f4" stroke="#7fa8c8"/><circle cx="5" cy="14" r="2" fill="#e04438"/><circle cx="8" cy="9" r="2" fill="#f0b428"/><circle cx="13.500" cy="8" r="2" fill="#5cb53c"/><circle cx="10.500" cy="15" r="2" fill="#8fbde6" stroke="#5f95c4" stroke-width=".7"/><path d="m19 7 2 1.500L14 23l-2 .5.500-3z" fill="#d9883a"/><path d="M19 1.500 24 0l-1 5-2.500 4L18 7.500z" fill="#b5835a"/>']
  ];
  const bars = ['<span class="h-0.5 w-10"></span>', '<span class="h-0.5 w-10 bg-[#0078d4]"></span>', '<span class="h-0.5 w-10 bg-[#0078d4] border-r-8 border-[#5ea9e2]"></span>'];
  document.getElementById('apps').innerHTML = apps.map(([bar, art]) =>
    `<div class="w-[49px] flex flex-col items-center justify-between pt-2"><svg class="size-6" viewBox="0 0 24 24">${art}</svg>${bars[bar]}</div>`).join('');
</script>
</body>
</html>
